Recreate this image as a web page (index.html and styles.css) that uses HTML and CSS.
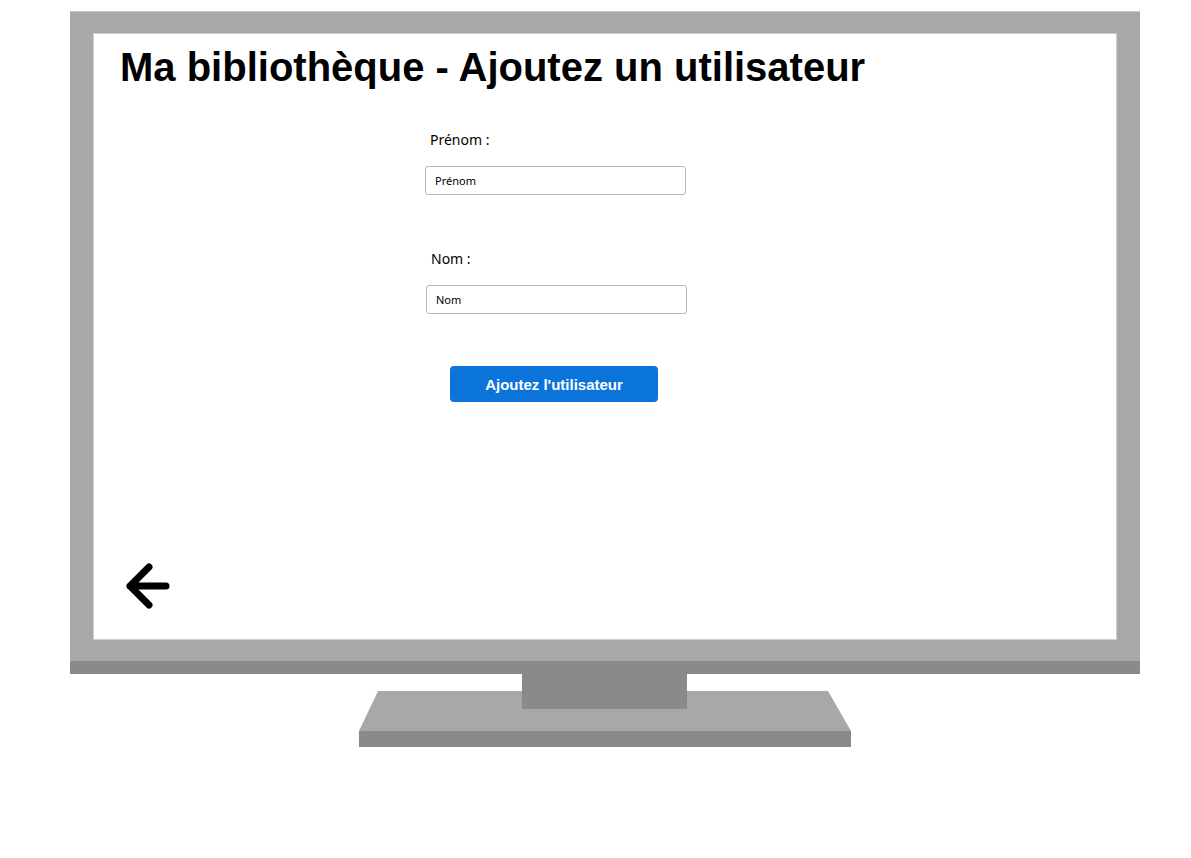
FILE: index.html
```html
<!DOCTYPE html>
<html lang="fr">
<head>
    <meta charset="UTF-8">
    <title>Ma bibliothèque - Ajoutez un utilisateur</title>
    <link rel="stylesheet" href="styles.css">
</head>
<body>

    <div class="desktop">
        <!-- Monitor frame -->
        <div class="monitor">
            <div class="screen">
                <h1 class="title">Ma bibliothèque - Ajoutez un utilisateur</h1>

                <form class="user-form">
                    <div class="field">
                        <label for="prenom">Prénom :</label>
                        <input type="text" id="prenom" placeholder="Prénom">
                    </div>
                    <div class="field field-nom">
                        <label for="nom">Nom :</label>
                        <input type="text" id="nom" placeholder="Nom">
                    </div>
                    <button type="button" class="add-btn">Ajoutez l'utilisateur</button>
                </form>

                <!-- Back arrow -->
                <a class="back" href="#">
                    <svg width="46" height="46" viewBox="0 0 46 46">
                        <path d="M25 4 L6 23 L25 42 M6 23 L42 23" fill="none" stroke="#000" stroke-width="7" stroke-linecap="round" stroke-linejoin="round"/>
                    </svg>
                </a>
            </div>
        </div>
        <div class="bezel"></div>

        <!-- Stand -->
        <div class="stand">
            <div class="neck"></div>
            <div class="base-top"></div>
            <div class="base-bottom"></div>
        </div>
    </div>

</body>
</html>
```
FILE: styles.css
```css
body {
    margin: 0;
    padding: 0;
    background: #fff;
    font-family: "Liberation Sans", Arial, sans-serif;
}

.desktop {
    width: 1070px;
    padding-top: 11px;
    margin-left: 70px;
}

/* Monitor frame */
.monitor {
    background-color: #a8a8a8;
    border-top: 1px solid #c8c8c8;
    padding: 21px 23px 21px 23px;
}

.screen {
    background: #fff;
    height: 605px;
    border: 1px solid #cfcfcf;
    position: relative;
}

.bezel {
    height: 13px;
    background-color: #8a8a8a;
}

.title {
    margin: 0;
    padding: 10px 0 0 26px;
    font-size: 40px;
    line-height: 46px;
    font-weight: bold;
    color: #000;
}

/* Form */
.user-form {
    margin-left: 331px;
    padding-top: 40px;
    width: 262px;
    font-family: "Noto Sans", sans-serif;
}

.field {
    display: flex;
    flex-direction: column;
}

.field label {
    font-size: 14px;
    line-height: 20px;
    padding-left: 5px;
    margin-bottom: 16px;
    color: #000;
}

.field input {
    width: 261px;
    height: 29px;
    box-sizing: border-box;
    border: 1px solid #b8b8b8;
    border-radius: 3px;
    padding: 0 9px;
    font-family: "Noto Sans", sans-serif;
    font-size: 11px;
}

.field input::placeholder {
    color: #000;
}

.field-nom {
    margin-top: 54px;
    margin-left: 1px;
}

.add-btn {
    display: block;
    margin: 52px 0 0 25px;
    width: 208px;
    height: 36px;
    border: none;
    border-radius: 4px;
    background-color: #0a74da;
    color: #fff;
    font-family: "Liberation Sans", Arial, sans-serif;
    font-size: 15px;
    font-weight: bold;
    cursor: pointer;
}

.back {
    position: absolute;
    left: 30px;
    bottom: 30px;
    display: block;
    line-height: 0;
}

/* Stand */
.stand {
    position: relative;
    height: 73px;
}

.neck {
    position: absolute;
    left: 452px;
    top: 0;
    width: 165px;
    height: 35px;
    background-color: #8a8a8a;
    z-index: 2;
}

.base-top {
    position: absolute;
    left: 289px;
    top: 17px;
    width: 492px;
    height: 40px;
    background-color: #a8a8a8;
    clip-path: polygon(19px 0, 469px 0, 100% 100%, 0 100%);
}

.base-bottom {
    position: absolute;
    left: 289px;
    top: 57px;
    width: 492px;
    height: 16px;
    background-color: #8a8a8a;
}
```
